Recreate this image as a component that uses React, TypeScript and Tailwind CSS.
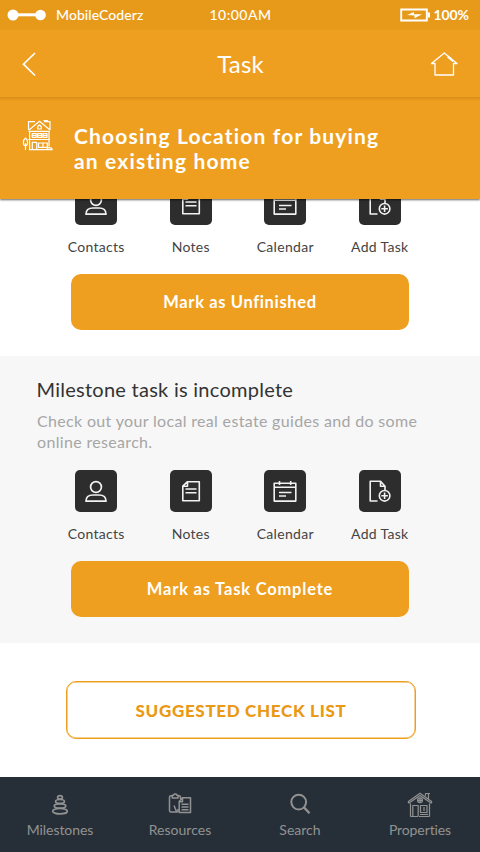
import type { ReactNode } from "react";

const stroke = {
  fill: "none",
  stroke: "currentColor",
  strokeLinejoin: "round" as const,
};

function ContactIcon() {
  return (
    <svg viewBox="0 0 42 42" className="size-[42px]" {...stroke} strokeWidth="1.7">
      <circle cx="21" cy="17" r="5.4" />
      <path d="M11 31.2C11 27 14 25 18 25h6c4 0 7 2 7 6.2z" />
    </svg>
  );
}

function NotesIcon() {
  return (
    <svg viewBox="0 0 42 42" className="size-[42px]" {...stroke} strokeWidth="1.6">
      <path d="M17.5 11.7h11.8v19h-16.5V16.2zM17.5 11.7v4.5h-4.7M15.5 19h11M15.5 22.8h11" />
    </svg>
  );
}

function CalendarIcon() {
  return (
    <svg viewBox="0 0 42 42" className="size-[42px]" {...stroke} strokeWidth="1.6">
      <path d="M10.2 13.2h21.6v17.9H10.2zM10.2 17.2h21.6M15.5 11v4M26.7 11v4M15 22.5h12.5M15 26h7" />
    </svg>
  );
}

function AddTaskIcon() {
  return (
    <svg viewBox="0 0 42 42" className="size-[42px]" {...stroke} strokeWidth="1.6">
      <path d="M18.5 31H11.2V11.2h10.3l4.5 5V20M21.5 11.2v5H26" />
      <circle cx="25.6" cy="25.8" r="5.3" />
      <path d="M25.6 22.5v6.6M22.3 25.8h6.6" />
    </svg>
  );
}

function TownhouseIcon() {
  return (
    <svg viewBox="0 0 32 32" className="h-8 w-8" {...stroke} strokeWidth="1.2">
      <path d="M6.5 11V2.7H13M22 2.7h6V11M7 11L17.5 2.3 28 11M21.5 1.5h4v1M15.8 10V7.5l1.7-1.5 1.7 1.5V10zM6.5 12.3h21.5M7.6 12.3v8M27 12.3v8M6.5 20.5H28M7.6 20.5v10.2M27 20.5v7" />
      <path d="M10.2 14.5h4v3.8h-4zM15.6 14.5h4v3.8h-4zM21 14.5h4v3.8h-4zM10.2 16.4h4M15.6 16.4h4M21 16.4h4M10.3 30.7v-7.3h4.4v7.3M16.5 24h8.8v4.4h-8.8zM21 24v4.4M7 30.7h23.5M3.5 31v-7" />
      <path d="M3.5 19c-2.8 2-2.8 7.5 0 8 2.8-.5 2.8-6 0-8zM24.8 30.5c.7-2.5 4.5-2.5 5.7 0" />
    </svg>
  );
}

function StonesIcon() {
  return (
    <svg viewBox="0 0 24 24" className="size-6" {...stroke} strokeWidth="1.7">
      <ellipse cx="12" cy="4.3" rx="2.4" ry="1.7" />
      <ellipse cx="12" cy="8.4" rx="4.4" ry="1.9" />
      <ellipse cx="12" cy="13" rx="5.8" ry="2.2" />
      <ellipse cx="12" cy="18.2" rx="7.3" ry="2.7" />
    </svg>
  );
}

function ResourcesIcon() {
  return (
    <svg viewBox="0 0 24 24" className="size-6" {...stroke} strokeWidth="1.5">
      <path d="M4.500 2.800H3a1.500 1.500 0 0 0-1.500 1.500v13.200c0 .8.500 1.500 1.300 1.500h7M9.500 2.800H11c1 0 1.500.500 1.500 1.200v2M4.300 2.300h1.200l.700-1.200h2l.700 1.200H10V5H4.300zM6 12.500l2.500 6M10 16v3" />
      <path d="M14.500 4.800h8v14.800H11.200V8.500zM14.500 4.800v3.900h-3.300M13.500 11.300h7M13.500 14h7M13.500 16.700h7" />
    </svg>
  );
}

function SearchIcon() {
  return (
    <svg viewBox="0 0 24 24" className="size-6" {...stroke} strokeWidth="2">
      <circle cx="10.7" cy="9.1" r="7.4" />
      <path d="M16 14.4l5.5 5.8" strokeWidth="2.3" />
    </svg>
  );
}

function CottageIcon() {
  return (
    <svg viewBox="0 0 26 26" className="size-[26px]" {...stroke} strokeWidth="1.2">
      <path d="M1 9.8L13 1.2l12 8.6M1 9.8l1 1.2L13 3.6l11 7.4 1-1.2M18.5 3.7V1.5H23M21.5 1.5v5M3.5 11.5v13M22.5 11.5v13M3.5 24.5H11M12 24.5h10.5" />
      <circle cx="13" cy="8.3" r="2.4" />
      <path d="M13 6v4.7M10.7 8.3h4.7M5.8 24.5v-11h5.4v11M13.5 13.5H20v7h-6.5zM17 15v4M13 22.5h8" />
    </svg>
  );
}

const actions = [
  { label: "Contacts", icon: <ContactIcon />, text: "tracking-[0.27px]" },
  { label: "Notes", icon: <NotesIcon />, text: "tracking-[0.3px]" },
  { label: "Calendar", icon: <CalendarIcon />, text: "tracking-[0.3px]" },
  { label: "Add Task", icon: <AddTaskIcon />, text: "tracking-[0.3px]" },
];

function Actions() {
  return (
    <div className="ml-[49px] grid w-[378px] grid-cols-4">
      {actions.map((a) => (
        <div key={a.label} className="flex flex-col items-center">
          <div className="size-[42px] rounded-[5px] bg-[#2d2d2d] text-[#f2f2f2]">{a.icon}</div>
          <span className={`mt-3 text-sm leading-5 text-[#444444] ${a.text}`}>{a.label}</span>
        </div>
      ))}
    </div>
  );
}

function PrimaryButton({ children }: { children: ReactNode }) {
  return (
    <button className="ml-[71px] mt-[17px] block h-14 w-[338px] rounded-[10px] bg-[#ee9f1f] text-[16.5px] font-bold text-white">
      {children}
    </button>
  );
}

const tabs = [
  { label: "Milestones", icon: <StonesIcon />, text: "tracking-[-0.05px]" },
  { label: "Resources", icon: <ResourcesIcon />, text: "tracking-[0.01px]" },
  { label: "Search", icon: <SearchIcon />, text: "tracking-[0.01px]" },
  { label: "Properties", icon: <CottageIcon />, text: "tracking-[-0.1px] [font-variant-ligatures:none]" },
];

export default function App() {
  return (
    <div className="flex h-[852px] w-[480px] flex-col overflow-hidden bg-white font-['Lato',sans-serif]">
      <header className="relative z-10 h-[199px] shrink-0 bg-[#ee9f1f] text-white shadow-[0_1px_2px_rgba(0,0,0,0.6)]">
        <div className="grid h-[30px] grid-cols-3 items-center bg-[#e79a1a] text-sm">
          <div className="flex items-center pl-[7px]">
            <svg viewBox="0 0 40 12" className="h-3 w-10" fill="currentColor">
              <circle cx="6" cy="6" r="5.5" />
              <circle cx="33.5" cy="6" r="5.3" />
              <path d="M6 4.3h28v3H6z" />
            </svg>
            <span className="ml-[9px] font-medium tracking-[0.05px]">MobileCoderz</span>
          </div>
          <span className="pl-px text-center font-medium tracking-[0.5px]">10:00AM</span>
          <div className="flex items-center justify-end pr-[11px]">
            <svg viewBox="0 0 30 14" className="mr-[4px] h-3.5 w-[30px]">
              <path d="M1.2 1.5h25.6v11H1.2z" fill="none" stroke="currentColor" strokeWidth="1.9" />
              <path d="M27.5 4.5H30v5h-2.5zM7 7l7-3v2.2h8l-7.5 4V7.5z" fill="currentColor" />
            </svg>
            <span className="font-bold tracking-[-0.1px]">100%</span>
          </div>
        </div>
        <div className="flex h-[67px] items-center justify-between pl-[21px] pr-[22px]">
          <svg viewBox="0 0 16 26" className="h-[26px] w-4" {...stroke} strokeWidth="1.7">
            <path d="M14 2L2.5 13.2 14 24.5" strokeLinejoin="miter" />
          </svg>
          <h1 className="ml-[14px] text-2xl tracking-[0.2px]">Task</h1>
          <svg viewBox="0 0 28 26" className="h-[26px] w-7" {...stroke} strokeWidth="1.3">
            <path d="M5 12.5H1.5L14.3 2 27 12.5h-3.5V24H5zM17.5 6l5.5 4.5M18 5l3 2.3" />
          </svg>
        </div>
        <div className="h-1 bg-linear-to-b from-[#d98d18] to-[#ee9f1f]" />
        <div className="flex">
          <div className="ml-[22px] mt-[18px]"><TownhouseIcon /></div>
          <h2 className="ml-5 mt-[22px] text-[21px] font-bold leading-[25px] tracking-[1.17px]">
            Choosing Location for buying<br />an existing home
          </h2>
        </div>
      </header>

      <main className="-mt-4 flex-1">
        <section className="h-[173px]">
          <Actions />
          <PrimaryButton><span className="tracking-[0.64px]">Mark as Unfinished</span></PrimaryButton>
        </section>
        <section className="h-[287px] bg-[#f7f7f7] pt-[19px]">
          <h3 className="ml-[36.5px] text-xl leading-7 tracking-[0.26px] text-[#333333]">Milestone task is incomplete</h3>
          <p className="ml-[37px] mt-[7px] mb-[18px] text-base leading-[21px] tracking-[0.33px] text-[#a6a6a6]">
            Check out your local real estate guides and do some<br />online research.
          </p>
          <Actions />
          <PrimaryButton><span className="tracking-[0.8px]">Mark as Task Complete</span></PrimaryButton>
        </section>
        <section className="pt-[38px]">
          <button className="ml-[66px] block h-[58px] w-[350px] rounded-[10px] border border-[#ee9f1f] pt-px text-[17px] font-black tracking-[0.68px] text-[#ea9914] shadow-[inset_0_0_0_0.5px_#ee9f1f]">
            SUGGESTED CHECK LIST
          </button>
        </section>
      </main>

      <nav className="grid h-[75px] shrink-0 grid-cols-4 bg-[#262f38] text-[#929292]">
        {tabs.map((t) => (
          <div key={t.label} className="flex flex-col items-center">
            <div className="mt-[15px] flex h-[26px] items-center">{t.icon}</div>
            <span className={`mt-0.5 text-sm leading-5 ${t.text}`}>{t.label}</span>
          </div>
        ))}
      </nav>
    </div>
  );
}
